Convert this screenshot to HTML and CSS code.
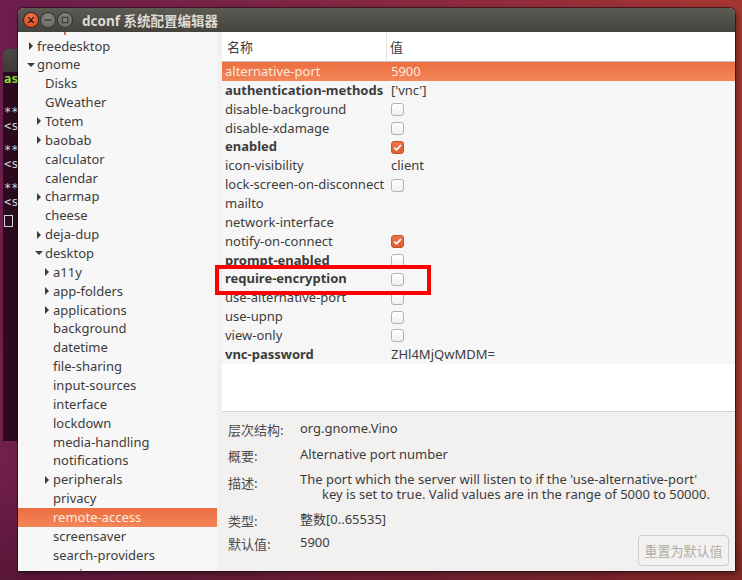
FILE: index.html
```html
<!DOCTYPE html>
<html lang="zh-CN">
<head>
<meta charset="utf-8">
<title>dconf 系统配置编辑器</title>
<link rel="stylesheet" href="styles.css">
</head>
<body>
<div class="desktop">
  <div class="terminal">
    <div class="term-title"></div>
    <div class="term-body">
      <div class="tl green">as</div>
      <div class="tl g1">**</div>
      <div class="tl">&lt;s</div>
      <div class="tl g2">**</div>
      <div class="tl">&lt;s</div>
      <div class="tl g2">**</div>
      <div class="tl">&lt;s</div>
      <div class="cursor"></div>
    </div>
  </div>

  <div class="window">
    <div class="titlebar">
      <span class="wbtn close"><svg width="14" height="14" viewBox="0 0 14 14"><path d="M4.6 4.6 L9.4 9.4 M9.4 4.6 L4.6 9.4" stroke="#3a1a10" stroke-width="1.4" stroke-linecap="round"/></svg></span>
      <span class="wbtn gray"><svg width="14" height="14" viewBox="0 0 14 14"><path d="M4 7 H10" stroke="#3c3b37" stroke-width="1.4" stroke-linecap="round"/></svg></span>
      <span class="wbtn gray"><svg width="14" height="14" viewBox="0 0 14 14"><rect x="4.3" y="4.3" width="5.4" height="5.4" fill="none" stroke="#3c3b37" stroke-width="1.2"/></svg></span>
      <span class="title">dconf 系统配置编辑器</span>
    </div>
    <div class="main">
      <div class="tree">
        <div class="tree-list">
          <div class="node l1 closed">compiz-1</div>
          <div class="node l1 closed">freedesktop</div>
          <div class="node l1 open">gnome</div>
          <div class="node l2">Disks</div>
          <div class="node l2">GWeather</div>
          <div class="node l2 closed">Totem</div>
          <div class="node l2 closed">baobab</div>
          <div class="node l2">calculator</div>
          <div class="node l2">calendar</div>
          <div class="node l2 closed">charmap</div>
          <div class="node l2">cheese</div>
          <div class="node l2 closed">deja-dup</div>
          <div class="node l2 open">desktop</div>
          <div class="node l3 closed">a11y</div>
          <div class="node l3 closed">app-folders</div>
          <div class="node l3 closed">applications</div>
          <div class="node l3">background</div>
          <div class="node l3">datetime</div>
          <div class="node l3">file-sharing</div>
          <div class="node l3">input-sources</div>
          <div class="node l3">interface</div>
          <div class="node l3">lockdown</div>
          <div class="node l3">media-handling</div>
          <div class="node l3">notifications</div>
          <div class="node l3 closed">peripherals</div>
          <div class="node l3">privacy</div>
          <div class="node l3 selected">remote-access</div>
          <div class="node l3">screensaver</div>
          <div class="node l3">search-providers</div>
          <div class="node l3">session</div>
        </div>
      </div>
      <div class="handle"></div>
      <div class="right">
        <div class="table">
          <div class="thead">
            <div class="th col-name">名称</div>
            <div class="th col-val">值</div>
          </div>
          <div class="rows">
            <div class="row selected"><span class="k">alternative-port</span><span class="v">5900</span></div>
            <div class="row"><span class="k b">authentication-methods</span><span class="v">['vnc']</span></div>
            <div class="row"><span class="k">disable-background</span><span class="v"><span class="cb"></span></span></div>
            <div class="row"><span class="k">disable-xdamage</span><span class="v"><span class="cb"></span></span></div>
            <div class="row"><span class="k b">enabled</span><span class="v"><span class="cb on"><svg width="13" height="13" viewBox="0 0 13 13"><path d="M3.2 6.6 L5.5 8.9 L9.9 4.2" fill="none" stroke="#fff" stroke-width="1.7"/></svg></span></span></div>
            <div class="row"><span class="k">icon-visibility</span><span class="v">client</span></div>
            <div class="row"><span class="k">lock-screen-on-disconnect</span><span class="v"><span class="cb"></span></span></div>
            <div class="row"><span class="k">mailto</span><span class="v"></span></div>
            <div class="row"><span class="k">network-interface</span><span class="v"></span></div>
            <div class="row"><span class="k">notify-on-connect</span><span class="v"><span class="cb on"><svg width="13" height="13" viewBox="0 0 13 13"><path d="M3.2 6.6 L5.5 8.9 L9.9 4.2" fill="none" stroke="#fff" stroke-width="1.7"/></svg></span></span></div>
            <div class="row"><span class="k b">prompt-enabled</span><span class="v"><span class="cb"></span></span></div>
            <div class="row"><span class="k b">require-encryption</span><span class="v"><span class="cb"></span></span></div>
            <div class="row"><span class="k">use-alternative-port</span><span class="v"><span class="cb"></span></span></div>
            <div class="row"><span class="k">use-upnp</span><span class="v"><span class="cb"></span></span></div>
            <div class="row"><span class="k">view-only</span><span class="v"><span class="cb"></span></span></div>
            <div class="row"><span class="k b">vnc-password</span><span class="v">ZHl4MjQwMDM=</span></div>
          </div>
        </div>
        <div class="details">
          <div class="lbl">层次结构:</div><div class="val">org.gnome.Vino</div>
          <div class="lbl">概要:</div><div class="val">Alternative port number</div>
          <div class="lbl">描述:</div><div class="val desc"><div>The port which the server will listen to if the 'use-alternative-port'</div><div class="cont">key is set to true. Valid values are in the range of 5000 to 50000.</div></div>
          <div class="lbl">类型:</div><div class="val">整数[0..65535]</div>
          <div class="lbl">默认值:</div><div class="val last">5900</div><button class="reset" disabled>重置为默认值</button>
        </div>
      </div>
    </div>
  </div>

  <div class="annot"></div>
</div>
</body>
</html>
```

FILE: styles.css
```css
* { box-sizing: border-box; margin: 0; padding: 0; }
html, body { width: 742px; height: 580px; overflow: hidden; }
body {
  font-family: "Noto Sans", "Noto Sans CJK SC", sans-serif;
  font-size: 13px;
  color: #3c3c3c;
}
.desktop {
  position: relative;
  width: 742px;
  height: 580px;
  overflow: hidden;
  background:
    linear-gradient(180deg, rgba(0,0,0,0) 80%, rgba(40,5,25,0.35) 100%),
    linear-gradient(100deg, #6c1d4d 0%, #7e2545 35%, #952e3a 65%, #ad3b2c 100%);
}

/* background terminal (mostly hidden behind the main window) */
.terminal {
  position: absolute;
  left: 3px;
  top: 49px;
  width: 40px;
  height: 392px;
  border-radius: 5px 0 0 0;
  overflow: hidden;
  background: #2c0a20;
  font-family: "DejaVu Sans Mono", monospace;
  font-size: 12px;
  color: #d3d7cf;
}
.term-title {
  height: 23px;
  background: linear-gradient(#4a4944, #3c3b37);
}
.term-body { padding: 0 0 0 1px; }
.tl { line-height: 14px; white-space: nowrap; }
.tl.green { color: #8ae234; font-weight: bold; }
.tl.g1 { margin-top: 19px; }
.tl.g2 { margin-top: 10px; }
.cursor {
  margin-top: 6px;
  width: 9px;
  height: 12px;
  border: 1px solid #d3d7cf;
}

/* main window */
.window {
  position: absolute;
  left: 18px;
  top: 8px;
  width: 717px;
  height: 563px;
  display: flex;
  flex-direction: column;
  border-radius: 6px 6px 0 0;
  overflow: hidden;
  box-shadow: 0 0 0 1px rgba(30,10,15,0.6), 2px 2px 6px rgba(0,0,0,0.45);
  background: #f2f1f0;
}
.titlebar {
  height: 24px;
  flex: none;
  display: flex;
  align-items: center;
  padding-left: 6px;
  gap: 3px;
  background: linear-gradient(#5b5a53, #44433e);
}
.wbtn {
  width: 14px;
  height: 14px;
  border-radius: 50%;
  display: flex;
  align-items: center;
  justify-content: center;
}
.wbtn.close {
  background: radial-gradient(circle at 50% 35%, #f57a52, #df4a22 75%);
  box-shadow: 0 0 0 1px #3a2a22;
}
.wbtn.gray {
  background: radial-gradient(circle at 50% 35%, #898881, #6e6d66 75%);
  box-shadow: 0 0 0 1px #36352f;
}
.title {
  margin-left: 7px;
  font-weight: bold;
  font-size: 13.5px;
  color: #dfdbd2;
  white-space: nowrap;
}
.main {
  flex: 1;
  display: flex;
  min-height: 0;
}

/* tree */
.tree {
  width: 199px;
  flex: none;
  background: #f7f7f7;
  overflow: hidden;
}
.tree-list { margin-top: -14.3px; }
.node {
  height: 18.87px;
  line-height: 17.87px;
  padding-top: 1px;
  white-space: nowrap;
  position: relative;
}
.node.l1 { padding-left: 19px; }
.node.l2 { padding-left: 27px; }
.node.l3 { padding-left: 35px; }
.node.closed::before,
.node.open::before {
  content: "";
  position: absolute;
  top: 50%;
  width: 0;
  height: 0;
}
.node.closed::before {
  margin-top: -4px;
  border-top: 4px solid transparent;
  border-bottom: 4px solid transparent;
  border-left: 4px solid #3c3c3c;
}
.node.open::before {
  margin-top: -2px;
  border-left: 4px solid transparent;
  border-right: 4px solid transparent;
  border-top: 4px solid #3c3c3c;
}
.node.l1.closed::before { left: 11px; }
.node.l1.open::before { left: 9px; }
.node.l2.closed::before { left: 19px; }
.node.l2.open::before { left: 17px; }
.node.l3.closed::before { left: 27px; }
.node.selected {
  background: linear-gradient(#ec6e3f, #f3865a);
  color: #fde9df;
}
.handle {
  width: 5px;
  flex: none;
  background: #f2f1f0;
}

/* right pane */
.right {
  flex: 1;
  display: flex;
  flex-direction: column;
  min-width: 0;
}
.table {
  height: 380px;
  flex: none;
  background: #ffffff;
  border-bottom: 1px solid #d6d4d0;
}
.thead {
  display: flex;
  height: 30px;
  border-bottom: 1px solid #c9c7c3;
  background: #ffffff;
}
.th {
  line-height: 29px;
  font-family: "Noto Sans CJK SC", sans-serif;
}
.col-name {
  width: 165px;
  padding-left: 5px;
  border-right: 1px solid #e3e1de;
}
.col-val { padding-left: 3px; }
.rows { background: #f6f6f6; }
.row {
  display: flex;
  height: 18.87px;
  line-height: 17.87px;
  padding-top: 1px;
  white-space: nowrap;
}
.row .k {
  width: 165px;
  padding-left: 3px;
  flex: none;
  overflow: hidden;
}
.row .k.b { font-weight: bold; }
.row .v {
  padding-left: 4px;
  display: flex;
  align-items: center;
}
.row.selected {
  background: linear-gradient(#ec6e3f, #f3865a);
  color: #fde9df;
}
.cb {
  width: 13px;
  height: 13px;
  border: 1px solid #b4b2ae;
  border-radius: 3px;
  background: linear-gradient(#ffffff, #f1f0ee);
  display: block;
}
.cb.on {
  border-color: #c4522a;
  background: linear-gradient(#ee7447, #dc5f30);
}
.cb svg { display: block; margin: -1px; }

/* details */
.details {
  flex: 1;
  display: grid;
  grid-template-columns: 72px 1fr auto;
  grid-template-rows: 26px 26px 39px 23px auto;
  padding: 8px 6px 0 6px;
  background: #f2f1f0;
}
.lbl {
  grid-column: 1;
  font-family: "Noto Sans CJK SC", sans-serif;
  color: #4a4a4a;
  line-height: 16px;
  padding-top: 2px;
}
.val {
  grid-column: 2 / 4;
  line-height: 16px;
  white-space: nowrap;
}
.val.desc { line-height: 15px; }
.val.desc .cont { padding-left: 22px; }
.val.last { grid-column: 2; }
.details .lbl:nth-of-type(4) { padding-top: 1px; }
.details .lbl:nth-of-type(5) { padding-top: 3px; }
.reset {
  grid-column: 3;
  grid-row: 5;
  align-self: start;
  margin-top: 1px;
  width: 91px;
  height: 31px;
  border: 1px solid #cfcdc9;
  border-radius: 4px;
  background: #f2f1f0;
  color: #b1ada6;
  font-family: "Noto Sans CJK SC", sans-serif;
  font-size: 13px;
}

/* annotation overlay */
.annot {
  position: absolute;
  left: 215px;
  top: 265px;
  width: 216px;
  height: 30px;
  border: 4px solid #ff0000;
}
```
